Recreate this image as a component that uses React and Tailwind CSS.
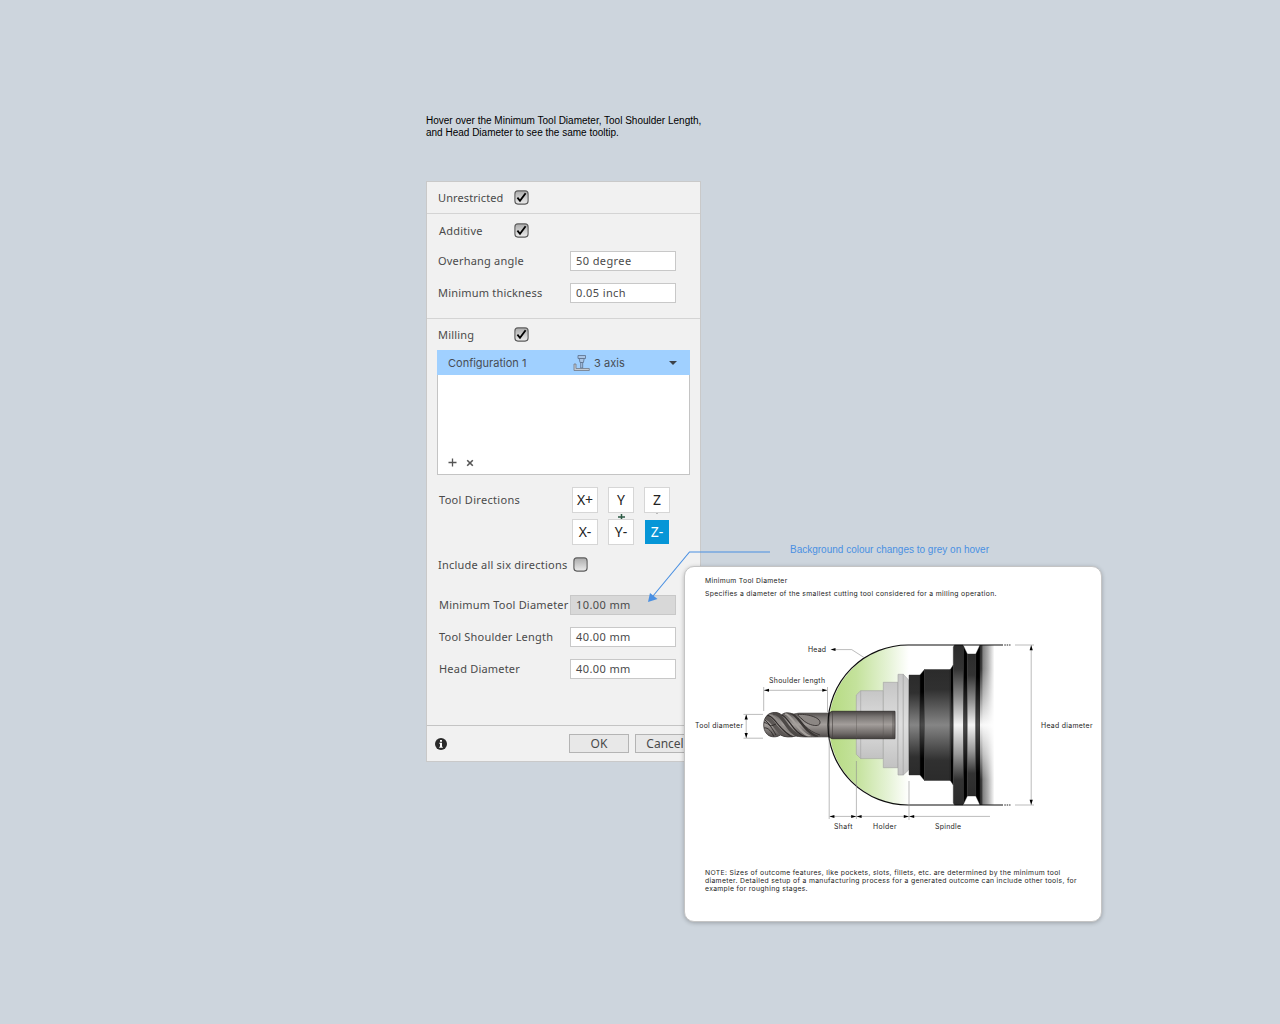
import React from 'react';

const LABEL = "font-['Noto_Sans'] text-[11px] text-[#4a4a4a] whitespace-nowrap leading-none";

function Label({ children, className = 'tracking-[0.2px]' }) {
  return <span className={`${LABEL} ${className}`}>{children}</span>;
}

function Checkbox({ checked, className = '' }) {
  return (
    <svg width="15" height="15" viewBox="0 0 15 15" className={`shrink-0 ${className}`}>
      <defs>
        <linearGradient id="cb" x1="0" y1="0" x2="0" y2="1">
          <stop offset="0" stopColor="#ababab" />
          <stop offset="1" stopColor="#ececec" />
        </linearGradient>
      </defs>
      <rect x="0.9" y="0.9" width="13.2" height="13.2" rx="3" fill="url(#cb)" stroke="#5c5c5c" strokeWidth="1.1" />
      {checked && <path d="M3.4 7.6 L6 10.8 L11.6 3.2" fill="none" stroke="#000" strokeWidth="1.8" />}
    </svg>
  );
}

function Field({ value, hovered }) {
  return (
    <div
      className={`flex h-5 w-[106px] shrink-0 items-center border border-[#c8c8c8] pb-0.5 pl-[5px] ${
        hovered ? 'bg-[#d8d8d8]' : 'bg-white'
      }`}
    >
      <Label className="tracking-[0.4px]">{value}</Label>
    </div>
  );
}

function FieldRow({ label, value, hovered, className = 'pl-[12px]' }) {
  return (
    <div className={`flex h-8 items-center ${className}`}>
      <div className="flex w-0 flex-1 items-center pb-0.5">
        <Label>{label}</Label>
      </div>
      <div className="mr-6 shrink-0">
        <Field value={value} hovered={hovered} />
      </div>
    </div>
  );
}

function Direction({ label, extra, active }) {
  return (
    <div
      className={`relative flex size-[26px] items-center justify-center border-[1.5px] bg-clip-padding font-['Noto_Sans'] text-[14px] leading-none ${
        active ? 'border-transparent bg-[#0696d7] text-white' : 'border-[#d6d6d6] bg-white text-[#222]'
      }`}
    >
      <span>{label}</span>
      {extra}
    </div>
  );
}

function MachineIcon() {
  return (
    <svg width="17" height="17" viewBox="0 0 17 17" className="shrink-0">
      <g fill="#a9c4e4" stroke="#5b6f8a" strokeWidth="0.8">
        <path d="M5 1.500h7.500v3H5z" />
        <path d="M6.200 4.500h5l-.8 4H7z" />
        <path d="M7.700 8.500h2v5.500h-2z" />
      </g>
      <path d="M1 10h2v4.500h13.300v2H1z" fill="#c3cad3" stroke="#727a86" strokeWidth="0.8" />
    </svg>
  );
}

function DiagramText({ x, y, w, children }) {
  return (
    <text x={x} y={y} textLength={w} fontFamily="Inter" fontSize="6.9" fill="#1c1c1c">
      {children}
    </text>
  );
}

function Heads({ points }) {
  const shapes = {
    l: (x, y) => `M${x} ${y}l5 -1.500v3z`,
    r: (x, y) => `M${x} ${y}l-5 -1.500v3z`,
    u: (x, y) => `M${x} ${y}l-1.600 5h3.200z`,
    d: (x, y) => `M${x} ${y}l-1.600 -5h3.200z`,
  };
  return <path fill="#000" d={points.map(([k, x, y]) => shapes[k](x, y)).join('')} />;
}

const BIT =
  'M829 713.200H799C795 713.200 795 715 790.500 713.200C786 712 784 713 781.500 714.800C778 712 775 712.300 772 712.800C766.500 714 763.700 719 763.700 725C763.700 731 767 736.500 773 736.800C776 737 778 736.500 780.500 735C784 737.300 791 737.500 796 736C802 737.300 806 736.800 829 736.800';

function ToolDiagram() {
  return (
    <svg width="416" height="210" viewBox="685 630 416 210" className="block">
      <defs>
        <linearGradient id="green" x1="828" x2="909" y1="0" y2="0" gradientUnits="userSpaceOnUse">
          <stop offset="0" stopColor="#b5da80" />
          <stop offset="0.35" stopColor="#c4e29c" />
          <stop offset="0.75" stopColor="#e6f3d7" />
          <stop offset="1" stopColor="#fff" />
        </linearGradient>
        <linearGradient id="steel" x1="0" x2="0" y1="0" y2="1">
          <stop offset="0" stopColor="#4a4645" />
          <stop offset="0.2" stopColor="#7a7674" />
          <stop offset="0.48" stopColor="#a39e9b" />
          <stop offset="0.8" stopColor="#706b69" />
          <stop offset="1" stopColor="#454140" />
        </linearGradient>
        <linearGradient id="dark" x1="0" x2="0" y1="0" y2="1">
          <stop offset="0" stopColor="#2b2b2b" />
          <stop offset="0.18" stopColor="#303030" />
          <stop offset="0.5" stopColor="#858585" />
          <stop offset="0.82" stopColor="#303030" />
          <stop offset="1" stopColor="#2b2b2b" />
        </linearGradient>
        <linearGradient id="black" x1="0" x2="0" y1="0" y2="1">
          <stop offset="0.2" stopColor="#000" />
          <stop offset="0.5" stopColor="#4a4a4a" />
          <stop offset="0.8" stopColor="#000" />
        </linearGradient>
        <linearGradient id="bright" x1="0" x2="0" y1="0" y2="1">
          <stop offset="0" stopColor="#2b2b2b" />
          <stop offset="0.15" stopColor="#333" />
          <stop offset="0.32" stopColor="#8a8a8a" />
          <stop offset="0.5" stopColor="#f5f5f5" />
          <stop offset="0.68" stopColor="#999" />
          <stop offset="0.84" stopColor="#333" />
          <stop offset="1" stopColor="#2b2b2b" />
        </linearGradient>
        <linearGradient id="fade" x1="0" x2="1" y1="0" y2="0">
          <stop offset="0" stopColor="#fff" stopOpacity="0.1" />
          <stop offset="0.15" stopColor="#fff" stopOpacity="0.42" />
          <stop offset="0.5" stopColor="#fff" stopOpacity="0.62" />
          <stop offset="1" stopColor="#fff" />
        </linearGradient>
        <linearGradient id="holder" x1="0" x2="0" y1="0" y2="1">
          <stop offset="0" stopColor="#c6c6c6" />
          <stop offset="0.5" stopColor="#dedede" />
          <stop offset="1" stopColor="#c2c2c2" />
        </linearGradient>
        <clipPath id="bit">
          <path d={`${BIT}z`} />
        </clipPath>
      </defs>

      <path d="M909 645A80 80 0 0 0 909 805z" fill="url(#green)" />

      <g fill="url(#holder)" stroke="#a0a0a0" strokeWidth="0.6">
        <path d="M856.300 695L860.700 690.700H883.300V758.600H860.700L856.300 754.300z" />
        <path d="M860.700 690.700V758.600" />
        <path d="M883.300 682.300H898V767.700H883.300z" />
        <path d="M898 674.300H903.300V775H898z" />
        <path d="M903.300 674.300L908.600 680V770L903.300 775z" />
      </g>

      <g stroke="#242424" strokeWidth="0.4">
        <path d="M909 675H920V775H909z" fill="url(#dark)" />
        <path d="M920 675L924.500 669.500V780.500L920 775z" fill="url(#black)" />
        <path d="M924.500 669.500H950.300V780.500H924.500z" fill="url(#dark)" />
        <path d="M950.300 669.500L953.300 665V785L950.300 780.500z" fill="url(#black)" />
        <path d="M953.300 647L954.500 645H963L963.500 647V803L963 805H954.500L953.300 803z" fill="url(#bright)" />
        <path d="M963.500 646L967.300 654V796L963.500 804z" fill="url(#black)" />
        <path d="M967.300 654H975.800V796H967.300z" fill="url(#bright)" />
        <path d="M975.800 654L980 645V805L975.800 796z" fill="url(#black)" />
      </g>
      <path d="M980 645H994V805H980z" fill="url(#bright)" />
      <path d="M981.500 645H994.500V805H981.500z" fill="url(#fade)" />

      <g clipPath="url(#bit)">
        <path d="M763 712H829V738H763z" fill="url(#steel)" />
        <g fill="none">
          <path d="M763 717C773 717 776 733 788 738" stroke="#5c5755" strokeWidth="4" />
          <path d="M769 715C778 715 781 732 796 736" stroke="#918c89" strokeWidth="1.800" />
          <path d="M773 713C784 713 786 733 803 738" stroke="#4c4846" strokeWidth="3.500" />
          <path d="M766 715.500C774 714 779 731 793 737" stroke="#2d2928" strokeWidth="1.100" />
          <path d="M781 714.500C790 718 792 733 808 738" stroke="#2d2928" strokeWidth="1.200" />
          <path d="M785 713.500C794 717 797 732 811 737" stroke="#a5a09c" strokeWidth="2" />
          <path d="M790 713C799 715 802 731 818 737" stroke="#3a3634" strokeWidth="2.200" />
          <path d="M798 718C802 722 807 731 820 735" stroke="#2d2928" strokeWidth="0.800" />
          <path d="M764 722.500C769 723 772 728 776 735M764 728C768 727 772 732 774 737M765 720L771 726L776 724" stroke="#2d2928" strokeWidth="0.900" />
          <path d="M798 714.500C805 713.500 821 717 820 723C819 728 807 725 802 719C800 717 798 716 798 714.500z" fill="#8c8784" stroke="#353130" strokeWidth="0.900" />
        </g>
      </g>
      <path d={BIT} fill="none" stroke="#3b3736" strokeWidth="0.8" />
      <path d="M829 713L832 711.300H895V738.700H832L829 737z" fill="url(#steel)" stroke="#302c2b" strokeWidth="0.8" />
      <path d="M832.500 711.300V738.700M893 712V738" stroke="#45403e" strokeWidth="0.6" />
      <path d="M856.500 712V738M883.300 712V738" stroke="#5a5553" strokeWidth="0.4" />

      <path d="M1003 645H908A80 80 0 0 0 908 805H1003" fill="none" stroke="#0d0d0d" strokeWidth="1.200" />
      <path d="M1004.300 645H1010.500M1004.300 805H1010.500" stroke="#222" strokeWidth="1.200" strokeDasharray="1.500 0.900" />

      <g fill="none" stroke="#8d8d8d" strokeWidth="0.6">
        <path d="M763.700 687V711M827.500 687V712M764 690.300H827" />
        <path d="M832 649.600H851.700L864 657.500" />
        <path d="M743.500 714.400H763M743.500 738.200H763M746.200 715V738" />
        <path d="M829.200 738V819M856.400 761V819M909 781V820M830 816.400H990" />
        <path d="M1015 645H1034M1015 805H1034M1031.200 645V805" />
      </g>
      <Heads
        points={[
          ['l', 764, 690.3], ['r', 827.3, 690.3], ['l', 830.5, 649.6],
          ['u', 746.2, 714.6], ['d', 746.2, 738],
          ['l', 829.4, 816.4], ['r', 856.2, 816.4], ['l', 856.6, 816.4], ['r', 908.8, 816.4], ['l', 909.2, 816.4],
          ['u', 1031.2, 645.3], ['d', 1031.2, 804.7],
        ]}
      />

      <DiagramText x="808" y="652" w="18">Head</DiagramText>
      <DiagramText x="769" y="683" w="56">Shoulder length</DiagramText>
      <DiagramText x="695" y="728" w="48">Tool diameter</DiagramText>
      <DiagramText x="1041" y="728" w="51.500">Head diameter</DiagramText>
      <DiagramText x="834" y="829" w="18.600">Shaft</DiagramText>
      <DiagramText x="873" y="829" w="23.500">Holder</DiagramText>
      <DiagramText x="935" y="829" w="26">Spindle</DiagramText>
    </svg>
  );
}

function Tooltip() {
  return (
    <div className="absolute left-[684px] top-[566px] flex h-[356px] w-[418px] flex-col rounded-[10px] border border-[#c4c4c4] bg-white font-['Inter'] text-[6.8px] leading-[8px] text-[#1c1c1c] shadow-[0_1px_4px_rgba(0,0,0,0.25)]">
      <div className="flex h-[63px] flex-col gap-[5px] whitespace-nowrap pl-5 pt-[10px]">
        <p className="tracking-[0.32px]">Minimum Tool Diameter</p>
        <p className="tracking-[0.33px]">Specifies a diameter of the smallest cutting tool considered for a milling operation.</p>
      </div>
      <ToolDiagram />
      <p className="mt-[29px] whitespace-nowrap pl-5 tracking-[0.33px]">
        NOTE: Sizes of outcome features, like pockets, slots, fillets, etc. are determined by the minimum tool
        <br />
        diameter. Detailed setup of a manufacturing process for a generated outcome can include other tools, for
        <br />
        example for roughing stages.
      </p>
    </div>
  );
}

function Panel() {
  return (
    <div className="flex h-[581px] w-[275px] flex-col border border-[#c9c9c9] bg-[#f1f1f1]">
      <section className="flex h-8 items-center border-b border-[#d4d4d4] pl-[11px]">
        <Label className="w-[76px] tracking-[0.1px]">Unrestricted</Label>
        <Checkbox checked />
      </section>

      <section className="h-[105px] border-b border-[#d4d4d4]">
        <div className="flex h-[31px] items-center pl-[12px] pt-px">
          <Label className="w-[75px] tracking-[0.2px]">Additive</Label>
          <Checkbox checked />
        </div>
        <FieldRow label="Overhang angle" value="50 degree" className="pl-[11px]" />
        <FieldRow label="Minimum thickness" value="0.05 inch" className="pl-[11px]" />
      </section>

      <section className="h-[407px] border-b border-[#c4c4c4]">
        <div className="flex h-[31px] items-center pl-[11px]">
          <Label className="w-[76px] tracking-[0.2px]">Milling</Label>
          <Checkbox checked />
        </div>
        <div className="mx-[10px] flex h-[125px] flex-col border border-t-0 border-[#c4c4c4] bg-white">
          <div className="-mx-px flex h-[25px] shrink-0 items-center bg-[#a0d0ff] pl-[11px] font-['Inter'] text-[11px] leading-none text-[#474d55]">
            <span className="w-[125px] pt-px">Configuration 1</span>
            <MachineIcon />
            <span className="ml-1 flex-1 pt-px tracking-[0.05px]">3 axis</span>
            <svg width="8" height="4" viewBox="0 0 8 4" className="mr-[13px]">
              <path d="M0 0h8L4 4z" fill="#3c4249" />
            </svg>
          </div>
          <div className="mt-auto flex items-center gap-[9px] pb-[7px] pl-[10px]">
            <svg width="9" height="9" viewBox="0 0 9 9">
              <path d="M4.500 .5v8M.5 4.500h8" stroke="#555" strokeWidth="1.300" />
            </svg>
            <svg width="8" height="8" viewBox="0 0 8 8">
              <path d="M1.200 1.200l5.600 5.600M6.800 1.200L1.200 6.800" stroke="#555" strokeWidth="1.600" />
            </svg>
          </div>
        </div>

        <div className="mt-3 flex pl-[12px]">
          <div className="flex h-[26px] w-[133px] items-center pb-0.5">
            <Label className="tracking-[0.3px]">Tool Directions</Label>
          </div>
          <div className="grid grid-cols-3 gap-x-[10px] gap-y-1.5">
            <Direction label="X+" />
            <Direction
              label="Y"
              extra={
                <svg width="7" height="6" viewBox="0 0 7 6" className="absolute left-[8.500px] top-[26px]">
                  <path d="M3.500 0v6M0 3h7" stroke="#2d5a45" strokeWidth="1.500" />
                </svg>
              }
            />
            <Direction label="Z" extra={<i className="absolute left-[11px] top-[25px] h-px w-0.5 bg-[#bbb]" />} />
            <Direction label="X-" />
            <Direction label="Y-" />
            <Direction label="Z-" active />
          </div>
        </div>

        <div className="mt-[3px] flex h-8 items-center pl-[11px]">
          <Label className="w-[135px] tracking-[0.22px]">Include all six directions</Label>
          <Checkbox />
        </div>

        <div className="mt-[9px]">
          <FieldRow label="Minimum Tool Diameter" value="10.00 mm" hovered />
          <FieldRow label="Tool Shoulder Length" value="40.00 mm" />
          <FieldRow label="Head Diameter" value="40.00 mm" />
        </div>
      </section>

      <footer className="flex h-[35px] items-center pl-2">
        <svg width="12" height="12" viewBox="0 0 12 12">
          <circle cx="6" cy="6" r="6" fill="#2a2a2a" />
          <path d="M5 2h2v1.700H5zM4.300 4.700H7V8.700H7.800V9.700H4.200V8.700H5V5.700H4.300z" fill="#fff" />
        </svg>
        <div className="ml-[122px] flex gap-[6px] font-['Noto_Sans'] text-[12px] leading-none text-[#4a4a4a]">
          <button className="h-[19px] w-[60px] border border-[#b4b4b4] bg-[#e8e8e8]">OK</button>
          <button className="h-[19px] w-[60px] border border-[#b4b4b4] bg-[#e8e8e8]">Cancel</button>
        </div>
      </footer>
    </div>
  );
}

export default function App() {
  return (
    <main className="relative h-[1024px] w-[1280px] overflow-hidden bg-[#cdd5dd] pl-[426px] pt-[115px]">
      <p className="h-[66px] whitespace-nowrap font-['Liberation_Sans'] text-[10px] leading-[12px] text-black">
        Hover over the Minimum Tool Diameter, Tool Shoulder Length,
        <br />
        and Head Diameter to see the same tooltip.
      </p>
      <Panel />
      <Tooltip />
      <svg width="130" height="60" viewBox="645 545 130 60" className="absolute left-[645px] top-[545px]">
        <path d="M770 552H689.500L653 596" fill="none" stroke="#4a90e2" strokeWidth="1.100" />
        <path d="M648 602L650 593L657.500 599z" fill="#4a90e2" />
      </svg>
      <p className="absolute left-[790px] top-[544px] whitespace-nowrap font-['Liberation_Sans'] text-[10px] leading-[12px] text-[#4a90e2]">
        Background colour changes to grey on hover
      </p>
    </main>
  );
}
